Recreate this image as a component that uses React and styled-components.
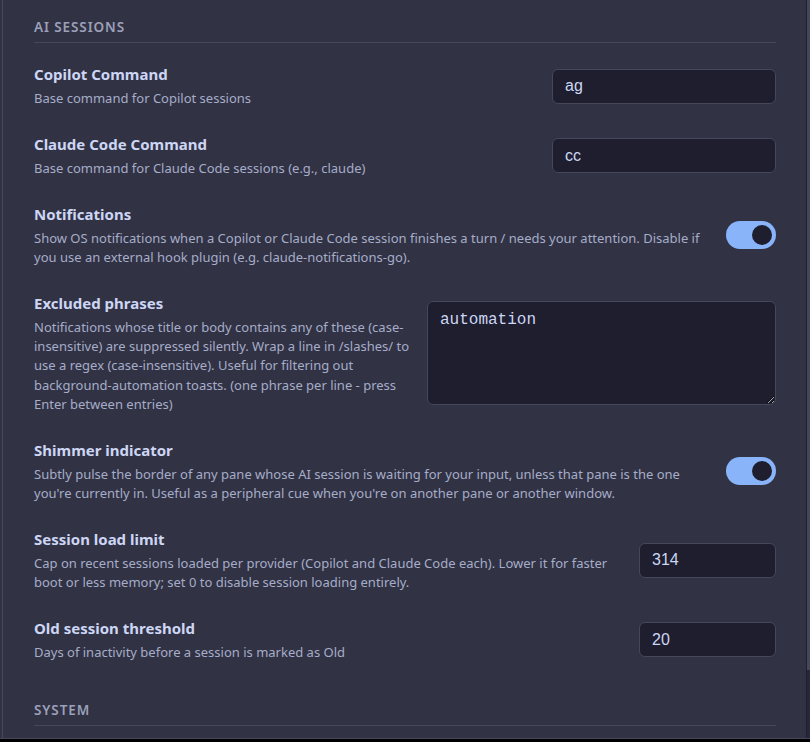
import styled, { createGlobalStyle } from "styled-components";

const GlobalStyle = createGlobalStyle`
  html, body {
    margin: 0;
    padding: 0;
    background: #000;
  }
  body {
    font-family: "Noto Sans", "Open Sans", sans-serif;
    -webkit-font-smoothing: antialiased;
  }
`;

const Window = styled.div`
  display: flex;
  height: 738px;
  background: #313244;
  border-bottom: 1px solid #45475a;
  overflow: hidden;
`;

const Scroller = styled.div`
  flex: 1;
  margin-left: 2px;
  border-left: 1px solid #45475a;
  border-right: 1px solid #1e1e2e;
  padding: 0 30px 0 31px;
  overflow: hidden;
`;

const Scrollbar = styled.div`
  width: 3px;
  background: #26273a;
`;

const Thumb = styled.div`
  height: 670px;
  background: #45475a;
`;

const Section = styled.section`
  padding: 18px 0 21px;
`;

const SectionTitle = styled.h3`
  margin: 0;
  padding-bottom: 6px;
  border-bottom: 1px solid #45475a;
  font-size: 13.5px;
  line-height: 18px;
  font-weight: 600;
  letter-spacing: 0.9px;
  text-transform: uppercase;
  color: #9ca0b9;
`;

const List = styled.div`
  display: flex;
  flex-direction: column;
  gap: 25.6px;
  margin-top: 21px;
`;

const Row = styled.div`
  display: flex;
  align-items: center;
  gap: 16px;
`;

const Info = styled.div`
  flex: 1;
  min-width: 0;
`;

const Label = styled.div`
  font-size: 15px;
  line-height: 20px;
  font-weight: 700;
  color: #cdd6f4;
  margin-bottom: 5px;
`;

const Desc = styled.div`
  font-size: 13px;
  line-height: 19.25px;
  color: #a6adc8;
`;

const TextInput = styled.input`
  box-sizing: border-box;
  flex: none;
  width: ${(p) => p.$width}px;
  height: 35px;
  padding: 0 12px;
  background: #1e1e2e;
  border: 1px solid #45475a;
  border-radius: 6px;
  color: #cdd6f4;
  font-family: "Liberation Sans", Arial, sans-serif;
  font-size: 16px;
  outline: none;
`;

const TextArea = styled.textarea`
  box-sizing: border-box;
  flex: none;
  width: 349px;
  height: 104px;
  padding: 9px 12px;
  background: #1e1e2e;
  border: 1px solid #45475a;
  border-radius: 6px;
  color: #cdd6f4;
  font-family: "Liberation Mono", "Courier New", monospace;
  font-size: 16px;
  line-height: 18px;
  outline: none;
  resize: vertical;
`;

const Toggle = styled.button`
  position: relative;
  flex: none;
  width: 50px;
  height: 28px;
  padding: 0;
  border: none;
  border-radius: 14px;
  background: ${(p) => (p.$on ? "#89b4fa" : "#45475a")};
  cursor: pointer;

  &::after {
    content: "";
    position: absolute;
    top: 4px;
    left: ${(p) => (p.$on ? "26px" : "4px")};
    width: 20px;
    height: 20px;
    border-radius: 50%;
    background: #1e1e2e;
  }
`;

const settings = [
  {
    label: "Copilot Command",
    desc: "Base command for Copilot sessions",
    type: "text",
    value: "ag",
    width: 224,
  },
  {
    label: "Claude Code Command",
    desc: "Base command for Claude Code sessions (e.g., claude)",
    type: "text",
    value: "cc",
    width: 224,
  },
  {
    label: "Notifications",
    desc: "Show OS notifications when a Copilot or Claude Code session finishes a turn / needs your attention. Disable if you use an external hook plugin (e.g. claude-notifications-go).",
    type: "toggle",
    value: true,
  },
  {
    label: "Excluded phrases",
    desc: "Notifications whose title or body contains any of these (case-insensitive) are suppressed silently. Wrap a line in /slashes/ to use a regex (case-insensitive). Useful for filtering out background-automation toasts. (one phrase per line - press Enter between entries)",
    type: "textarea",
    value: "automation",
  },
  {
    label: "Shimmer indicator",
    desc: "Subtly pulse the border of any pane whose AI session is waiting for your input, unless that pane is the one you're currently in. Useful as a peripheral cue when you're on another pane or another window.",
    type: "toggle",
    value: true,
  },
  {
    label: "Session load limit",
    desc: "Cap on recent sessions loaded per provider (Copilot and Claude Code each). Lower it for faster boot or less memory; set 0 to disable session loading entirely.",
    type: "text",
    value: "314",
    width: 137,
  },
  {
    label: "Old session threshold",
    desc: "Days of inactivity before a session is marked as Old",
    type: "text",
    value: "20",
    width: 137,
  },
];

const Control = ({ item }) => {
  if (item.type === "toggle") return <Toggle $on={item.value} aria-pressed={item.value} />;
  if (item.type === "textarea")
    return <TextArea defaultValue={item.value} spellCheck={false} />;
  return <TextInput $width={item.width} defaultValue={item.value} spellCheck={false} />;
};

const App = () => {
  return (
    <>
      <GlobalStyle />
      <Window>
        <Scroller>
          <Section>
            <SectionTitle>AI Sessions</SectionTitle>
            <List>
              {settings.map((item) => (
                <Row key={item.label}>
                  <Info>
                    <Label>{item.label}</Label>
                    <Desc>{item.desc}</Desc>
                  </Info>
                  <Control item={item} />
                </Row>
              ))}
            </List>
          </Section>
          <Section>
            <SectionTitle>System</SectionTitle>
          </Section>
        </Scroller>
        <Scrollbar>
          <Thumb />
        </Scrollbar>
      </Window>
    </>
  );
};

export default App;
